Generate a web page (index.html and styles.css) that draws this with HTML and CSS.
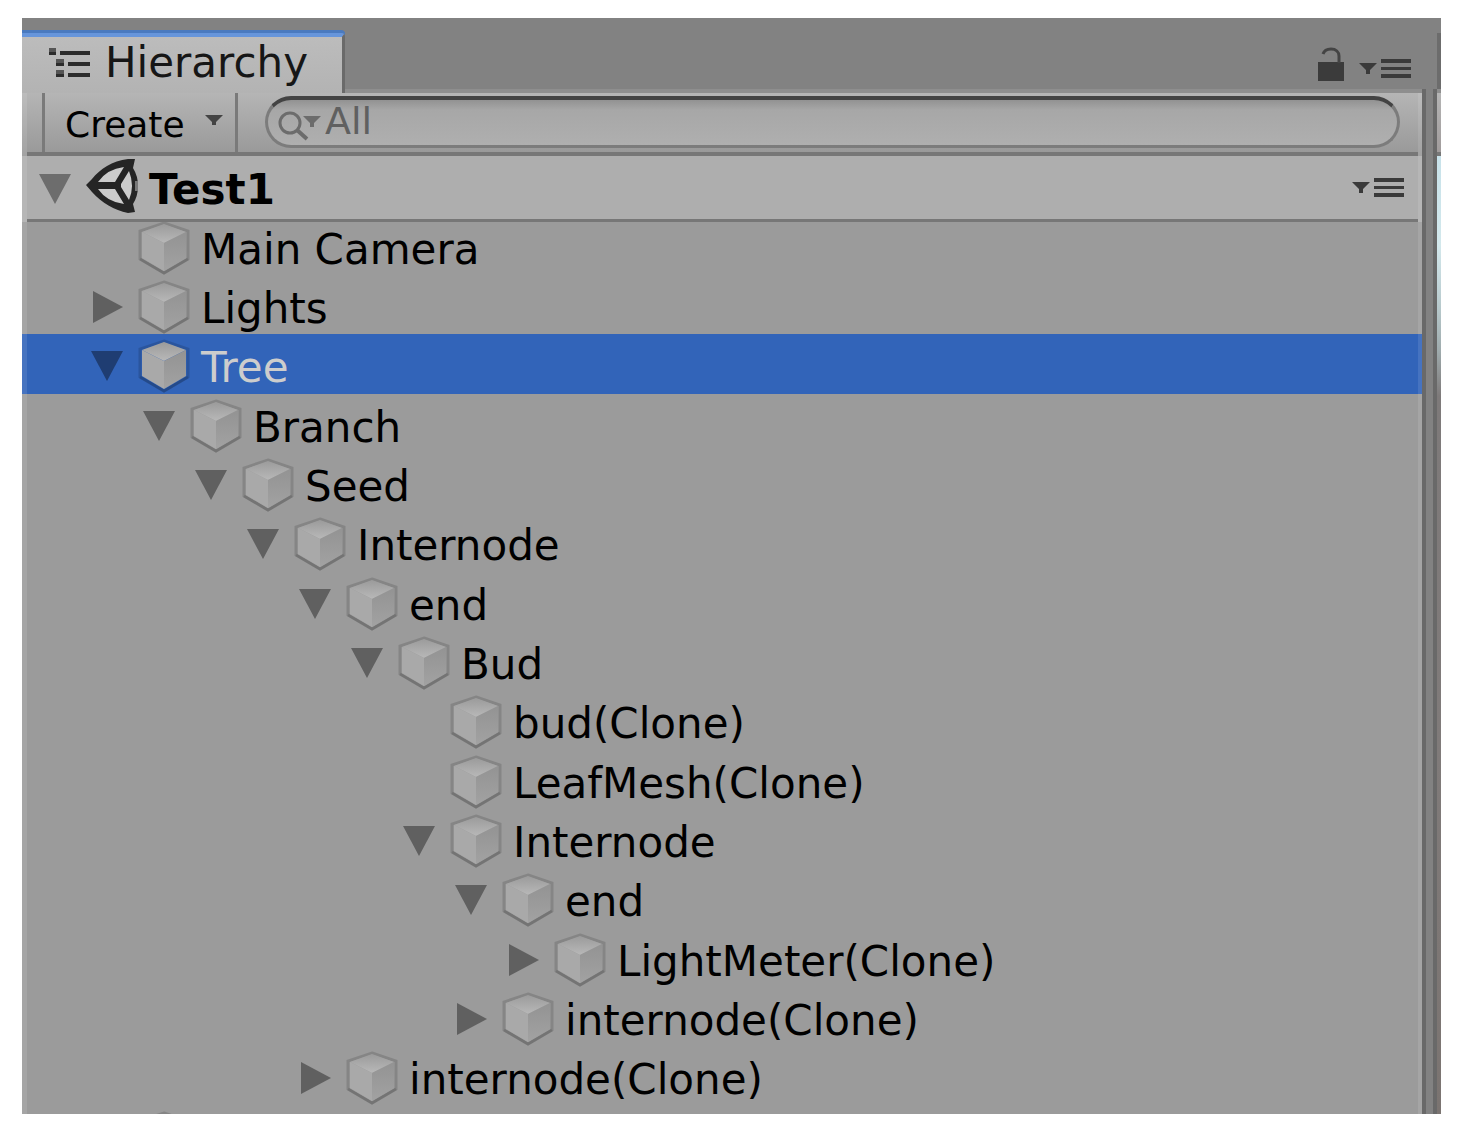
FILE: index.html
```html
<!DOCTYPE html>
<html lang="en">
<head>
	<meta charset="UTF-8">
	<title>Hierarchy</title>
	<meta name="viewport" content="width=device-width, initial-scale=1.0">
	<link rel="stylesheet" href="styles.css">
</head>
<body>
	<!-- shared icons -->
	<svg class="sprite" aria-hidden="true">
		<linearGradient id="cube-top" x1="0" y1="0" x2="0" y2="1">
			<stop offset="0" stop-color="#9b9b9b"/>
			<stop offset="1" stop-color="#b8b8b8"/>
		</linearGradient>
		<linearGradient id="cube-side" x1="0" y1="0" x2="0" y2="1">
			<stop offset="0" stop-color="#939393"/>
			<stop offset="1" stop-color="#a2a2a2"/>
		</linearGradient>
		<symbol id="cube" viewBox="0 0 52 54">
			<path d="M26 2L50 10V38L26 52L2 38V10Z" fill="none" stroke="#000" stroke-opacity=".14" stroke-width="3"/>
			<path d="M2 38L26 52L50 38" fill="none" stroke="#000" stroke-opacity=".12" stroke-width="3"/>
			<path d="M26 3L48 11L26 22L4 11Z" fill="url(#cube-top)"/>
			<path d="M4 11L26 22V50L4 37Z" fill="#a9a9a9"/>
			<path d="M48 11L26 22V50L48 37Z" fill="url(#cube-side)"/>
		</symbol>
		<symbol id="open" viewBox="0 0 32 32"><path d="M0 1H32L16 31Z"/></symbol>
		<symbol id="closed" viewBox="0 0 32 32"><path d="M2 0L32 16L2 32Z"/></symbol>
		<symbol id="small-arrow" viewBox="0 0 18 12"><path d="M0 1H18L11 8V11H7V8Z"/></symbol>
		<symbol id="menu" viewBox="0 0 52 20">
			<path d="M0 4H18L11 11V15H7V11Z"/>
			<path d="M22 0H52V4H22ZM22 8H52V11H22ZM22 15H52V19H22Z"/>
		</symbol>
	</svg>

	<main class="window">
		<section class="panel">
			<header class="tabs">
				<button class="tab" type="button">
					<svg class="tab-icon" viewBox="0 0 42 30" aria-hidden="true">
						<path fill="#555" d="M0 0H7V7H0ZM7 11H15V18H7ZM7 22H15V29H7Z"/>
						<path fill="#2c2c2c" d="M0 4H7V7H0ZM7 15H15V18H7ZM7 26H15V29H7ZM11 3H41V7H11ZM19 14H41V18H19ZM19 25H41V29H19Z"/>
					</svg>
					<span>Hierarchy</span>
				</button>
				<div class="tab-tools">
					<button type="button" aria-label="Lock">
						<svg class="lock" viewBox="0 0 26 34" aria-hidden="true">
							<path fill="#3b3b3b" d="M0 15H26V34H0Z"/>
							<path fill="none" stroke="#444" stroke-width="3" d="M5 7C6 4 9 2 13 2C18 2 21 5 21 9V16"/>
						</svg>
					</button>
					<button type="button" aria-label="Panel menu">
						<svg class="menu" aria-hidden="true"><use href="#menu"/></svg>
					</button>
				</div>
			</header>

			<div class="toolbar">
				<button class="create" type="button">
					<span>Create</span>
					<svg class="small-arrow" aria-hidden="true"><use href="#small-arrow"/></svg>
				</button>
				<label class="search">
					<svg class="search-icon" viewBox="0 0 44 32" aria-hidden="true">
						<circle cx="12" cy="13" r="10" fill="none" stroke="#6c6c6c" stroke-width="3"/>
						<path d="M19 20L29 29" stroke="#6c6c6c" stroke-width="4"/>
						<path d="M25 6H43L36 13V17H32V13Z" fill="#6c6c6c"/>
					</svg>
					<input type="search" placeholder="All" aria-label="Search">
				</label>
			</div>

			<div class="scene">
				<svg class="arrow" aria-hidden="true"><use href="#open"/></svg>
				<svg class="unity" viewBox="0 0 52 54" aria-hidden="true">
					<path fill="#252525" d="M0 26L6 20C14 10 26 2 42 0H49L47 9Q52 17 52 27Q52 37 47 45L49 53L42 54C28 51 16 44 6 33Z"/>
					<path fill="#ccc" d="M12 23Q21 10 38 8L29 23ZM12 30H29L38 45Q21 43 12 30ZM43 12L35 25V28L43 41Q49 27 43 12Z"/>
					<path fill="#777" d="M49 22H52V32H49Z"/>
				</svg>
				<h1>Test1</h1>
				<button type="button" aria-label="Scene menu">
					<svg class="menu" aria-hidden="true"><use href="#menu"/></svg>
				</button>
			</div>

			<ul class="tree">
				<li class="row level-0"><i class="arrow"></i><svg class="cube"><use href="#cube"/></svg>Main Camera</li>
				<li class="row level-0"><svg class="arrow"><use href="#closed"/></svg><svg class="cube"><use href="#cube"/></svg>Lights</li>
				<li class="row level-0 selected"><svg class="arrow"><use href="#open"/></svg><svg class="cube"><use href="#cube"/></svg>Tree</li>
				<li class="row level-1"><svg class="arrow"><use href="#open"/></svg><svg class="cube"><use href="#cube"/></svg>Branch</li>
				<li class="row level-2"><svg class="arrow"><use href="#open"/></svg><svg class="cube"><use href="#cube"/></svg>Seed</li>
				<li class="row level-3"><svg class="arrow"><use href="#open"/></svg><svg class="cube"><use href="#cube"/></svg>Internode</li>
				<li class="row level-4"><svg class="arrow"><use href="#open"/></svg><svg class="cube"><use href="#cube"/></svg>end</li>
				<li class="row level-5"><svg class="arrow"><use href="#open"/></svg><svg class="cube"><use href="#cube"/></svg>Bud</li>
				<li class="row level-6"><i class="arrow"></i><svg class="cube"><use href="#cube"/></svg>bud(Clone)</li>
				<li class="row level-6"><i class="arrow"></i><svg class="cube"><use href="#cube"/></svg>LeafMesh(Clone)</li>
				<li class="row level-6"><svg class="arrow"><use href="#open"/></svg><svg class="cube"><use href="#cube"/></svg>Internode</li>
				<li class="row level-7"><svg class="arrow"><use href="#open"/></svg><svg class="cube"><use href="#cube"/></svg>end</li>
				<li class="row level-8"><svg class="arrow"><use href="#closed"/></svg><svg class="cube"><use href="#cube"/></svg>LightMeter(Clone)</li>
				<li class="row level-7"><svg class="arrow"><use href="#closed"/></svg><svg class="cube"><use href="#cube"/></svg>internode(Clone)</li>
				<li class="row level-4"><svg class="arrow"><use href="#closed"/></svg><svg class="cube"><use href="#cube"/></svg>internode(Clone)</li>
				<!-- next row, cut off by the panel edge -->
				<li class="row level-0 cut"><i class="arrow"></i><svg class="cube"><use href="#cube"/></svg></li>
			</ul>
		</section>

		<div class="splitter"></div>

		<!-- edge of the scene view -->
		<aside class="neighbour">
			<div class="neighbour-tabs"></div>
			<div class="neighbour-toolbar"></div>
			<div class="neighbour-view"></div>
		</aside>
	</main>
</body>
</html>
```
FILE: styles.css
```css
* {
	box-sizing: border-box;
}
body {
	margin: 0;
	background: #fff;
	color: #000;
	font-family: "DejaVu Sans", Verdana, sans-serif;
	font-size: 42px;
	line-height: 48px;
}
button {
	padding: 0;
	border: none;
	background: none;
	color: inherit;
	font: inherit;
}
svg {
	display: block;
	flex: none;
}
.sprite {
	position: absolute;
	width: 0;
	height: 0;
}

.window {
	display: flex;
	min-height: 100vh;
	padding: 18px 29px 26px 22px;
	background: #828282;
	background-clip: content-box;
}
.panel {
	display: flex;
	flex-direction: column;
	flex: 1;
	min-width: 0;
}

/* tab bar */
.tabs {
	display: flex;
	justify-content: space-between;
	height: 75px;
	padding-top: 15px;
	border-bottom: 4px solid #8e8e8e;
}
.tab {
	display: flex;
	align-items: center;
	gap: 14px;
	width: 323px;
	height: 60px;
	padding: 0 0 4px 27px;
	border-top: 4px solid #6695db;
	border-right: 3px solid #6a6a6a;
	border-top-right-radius: 4px;
	background: linear-gradient(#bcbcbc, #b3b3b3);
	box-shadow: 0 -3px #4a7abf;
	color: #161616;
}
.tab-icon {
	width: 42px;
	height: 30px;
}
.tab-tools {
	display: flex;
	align-items: flex-end;
	gap: 15px;
	padding: 0 22px 8px 0;
}
.lock {
	width: 26px;
	height: 34px;
}
.menu {
	width: 52px;
	height: 20px;
	margin-bottom: 2px;
	fill: #3a3a3a;
}

/* create button and search */
.toolbar {
	display: flex;
	height: 63px;
	margin-right: 11px;
	padding-left: 15px;
	border: solid rgba(255, 255, 255, .1);
	border-width: 0 4px 0 5px;
	background: linear-gradient(#b5b5b5, #989898);
	background-origin: border-box;
	box-shadow: inset 0 -4px #777;
}
.create {
	display: flex;
	align-items: center;
	gap: 20px;
	height: 59px;
	width: 196px;
	padding: 4px 0 0 20px;
	border: solid #7a7a7a;
	border-width: 0 3px;
	font-size: 36px;
}
.small-arrow {
	width: 18px;
	height: 12px;
	margin-bottom: 10px;
	fill: #444;
}
.search {
	display: flex;
	align-items: flex-start;
	flex: 1;
	height: 52px;
	margin: 3px 18px 0 27px;
	padding-left: 10px;
	border: solid #7c7c7c;
	border-width: 4px 3px 3px;
	border-top-color: #434343;
	border-radius: 26px;
	background: linear-gradient(#929292, #a7a7a7 10px, #afafaf);
}
.search-icon {
	width: 44px;
	height: 32px;
	margin-top: 10px;
}
.search input {
	flex: 1;
	min-width: 0;
	height: 42px;
	margin-left: 3px;
	padding: 0;
	border: none;
	outline: none;
	background: none;
	font: inherit;
	font-size: 38px;
	line-height: 42px;
}
.search input::placeholder {
	color: #606060;
	opacity: 1;
}

/* scene header */
.scene {
	display: flex;
	align-items: center;
	position: relative;
	z-index: 1;
	height: 66px;
	margin-right: 11px;
	padding: 0 14px 0 12px;
	border: solid rgba(255, 255, 255, .1);
	border-width: 0 4px 0 5px;
	background: #aeaeae;
	box-shadow: inset 0 -3px #777;
}
.scene h1 {
	flex: 1;
	margin: 2px 0 0 11px;
	font-size: 42px;
	line-height: 48px;
}
.unity {
	width: 52px;
	height: 54px;
	margin: 0 0 6px 15px;
}
.scene .arrow {
	fill: #6d6d6d;
}
.arrow {
	flex: none;
	width: 32px;
	height: 32px;
	fill: #606060;
}

/* tree, the first row starts under the scene header */
.tree {
	flex: 1;
	margin: -6px 11px 0 0;
	padding: 0;
	background: #9b9b9b;
	list-style: none;
}
.row {
	display: flex;
	align-items: center;
	height: 59px;
	padding-top: 8px;
	border: solid rgba(255, 255, 255, .1);
	border-width: 0 4px 0 5px;
	white-space: nowrap;
}
.row:nth-child(3n) {
	height: 60px;
}
.row .arrow {
	margin-bottom: 4px;
}
.cube {
	width: 52px;
	height: 54px;
	margin: 0 11px 4px 15px;
}
.row.selected {
	background: #3264b9;
	color: #cdcdcd;
}
.selected .arrow {
	fill: #1f3d72;
}
.row.cut {
	align-items: flex-start;
	height: 8px;
	padding-top: 5px;
	overflow: hidden;
}
.level-0 { padding-left: 64px; }
.level-1 { padding-left: 116px; }
.level-2 { padding-left: 168px; }
.level-3 { padding-left: 220px; }
.level-4 { padding-left: 272px; }
.level-5 { padding-left: 324px; }
.level-6 { padding-left: 376px; }
.level-7 { padding-left: 428px; }
.level-8 { padding-left: 480px; }

/* gap between the panels */
.splitter {
	width: 15px;
	margin: 71px 0 0 -11px;
	border: solid #696969;
	border-width: 0 4px;
	background: #828282;
}
.neighbour {
	display: flex;
	flex-direction: column;
	width: 4px;
}
.neighbour-tabs {
	height: 60px;
	margin-top: 15px;
	background: #6c6c6c;
	border-bottom: 4px solid #8e8e8e;
}
.neighbour-toolbar {
	height: 63px;
	background: linear-gradient(#b5b5b5, #a19c9c);
	border-bottom: 4px solid #777;
}
.neighbour-view {
	flex: 1;
	background: linear-gradient(#c8e2ea, #d3e8ec 90px, #b8cacd 150px, #9fabad 195px, #7e7a7a 240px, #807b7a 600px, #7b7471);
}
```
